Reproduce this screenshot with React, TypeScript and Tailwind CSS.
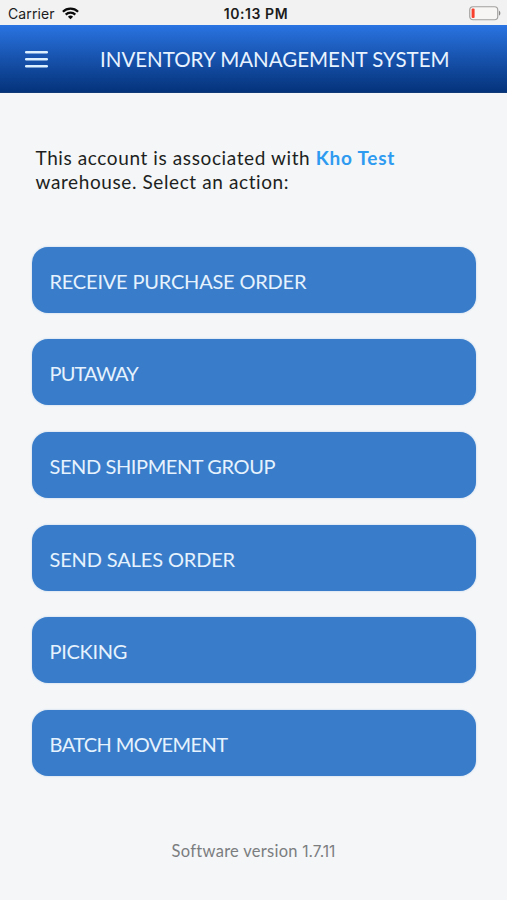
const actions = [
  { label: 'RECEIVE PURCHASE ORDER', tracking: 'tracking-[-0.2px]' },
  { label: 'PUTAWAY', tracking: 'tracking-[-0.85px]' },
  { label: 'SEND SHIPMENT GROUP', tracking: 'tracking-[-0.4px]' },
  { label: 'SEND SALES ORDER', tracking: 'tracking-[-0.14px]' },
  { label: 'PICKING', tracking: 'tracking-[-0.3px]' },
  { label: 'BATCH MOVEMENT', tracking: 'tracking-[-0.6px]' },
];

function WifiIcon() {
  return (
    <svg width="17" height="13" viewBox="0 0 17 13" fill="none" stroke="#0b0b0b" strokeWidth="2.2">
      <path d="M0.9 4.7a10.8 10.8 0 0 1 15.2 0" />
      <path d="M3.7 7.6a6.8 6.8 0 0 1 9.6 0" />
      <path d="M8.5 12.3 5.9 9.7a3.7 3.7 0 0 1 5.2 0Z" fill="#0b0b0b" stroke="none" />
    </svg>
  );
}

function BatteryIcon() {
  return (
    <svg width="33" height="15" viewBox="0 0 33 15" fill="none">
      <rect x="1.75" y="0.75" width="28" height="13" rx="3.2" fill="#f7f6f5" stroke="#a3a19f" strokeWidth="1.2" />
      <rect x="3.6" y="2.6" width="3" height="9.4" rx="1" fill="#f8402f" />
      <path d="M31 4.8c1.8.5 1.8 4.3 0 4.8Z" fill="#8b8987" />
    </svg>
  );
}

function MenuIcon() {
  return (
    <svg width="23" height="18" viewBox="0 0 23 18" stroke="#dcefff" strokeWidth="2.5" strokeLinecap="round">
      <path d="M1.2 2.2h20.6M1.2 9.2h20.6M1.2 16.2h20.6" />
    </svg>
  );
}

export default function App() {
  return (
    <div className="flex h-[900px] w-[507px] flex-col overflow-hidden bg-[#f4f6f8] font-['Lato',sans-serif]">
      <div className="grid h-[25px] shrink-0 grid-cols-3 items-center bg-[#f2f2f2] pt-[2px] pr-[6px] pl-2 font-['Inter',sans-serif] text-[14px] leading-[22px] text-[#1c1c1c]">
        <div className="flex items-center gap-[7px]">
          <span className="tracking-[0.1px]">Carrier</span>
          <WifiIcon />
        </div>
        <span className="pl-[3px] text-center font-semibold tracking-[0.55px]">10:13 PM</span>
        <div className="flex justify-end">
          <BatteryIcon />
        </div>
      </div>
      <header className="flex h-[68px] shrink-0 items-center border-b border-[#103a78] bg-linear-to-b from-[#2a74e2] to-[#05337b] pl-[25px] text-[#e8f3ff]">
        <button aria-label="Menu">
          <MenuIcon />
        </button>
        <h1 className="ml-[52px] whitespace-nowrap text-[20.5px] leading-6">INVENTORY MANAGEMENT SYSTEM</h1>
      </header>
      <main className="flex flex-col px-[31.5px] pt-[53px]">
        <p className="pl-[4px] text-[19px] leading-6 tracking-[0.6px] text-[#1d1f21]">
          <span className="whitespace-nowrap">
            This account is associated with <b className="tracking-[0.75px] text-[#2f9bf0]">Kho Test</b>
          </span>
          <br />
          <span>warehouse. Select an action:</span>
        </p>
        <div className="mt-[52.9px] flex flex-col gap-[26.57px]">
          {actions.map((a) => (
            <button
              key={a.label}
              className="flex h-[66px] items-center rounded-[16px] bg-[#397dca] pt-[2px] pl-[18px] text-[20px] leading-6 text-[#e6f2fd] shadow-[0_0_2px_rgba(57,125,202,0.35)]"
            >
              <span className={a.tracking}>{a.label}</span>
            </button>
          ))}
        </div>
        <p className="mt-[65px] text-center text-[16.5px] leading-5 text-[#7b7d7f]">
          <span className="tracking-[0.28px]">Software version </span>
          <span className="font-['Inter',sans-serif] text-[15.5px]">1.7.11</span>
        </p>
      </main>
    </div>
  );
}
